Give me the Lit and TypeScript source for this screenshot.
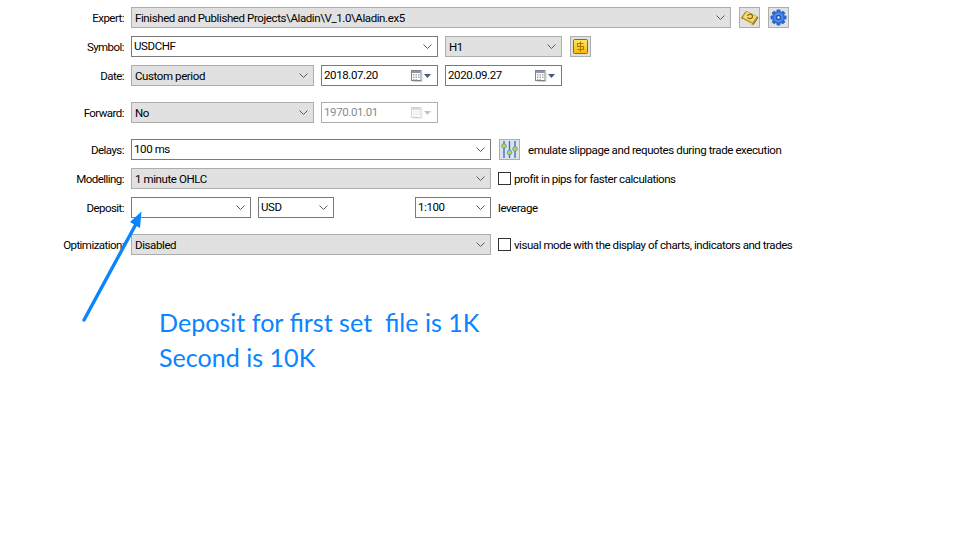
import { LitElement, html, css, svg } from "lit";
import { customElement } from "lit/decorators.js";

const chevron = html`<svg class="chev" viewBox="0 0 9 5" width="9" height="5"><path d="M.5.5 4.5 4.5 8.5.5" fill="none" stroke="#5a5a5a" stroke-width="1"/></svg>`;

const calendar = (off = false) => html`<span class="cal ${off ? "off" : ""}">
  <svg viewBox="0 0 12 12" width="12" height="12">
    <rect x=".5" y=".5" width="9.500" height="10" fill="#fff" stroke="#7d838e"/>
    <rect x="1" y="1" width="8.500" height="2" fill="#8f95a1"/>
    <path d="M2 4h1.500v1.500H2zM4.500 4H6v1.500H4.500zM7 4h1.500v1.500H7zM2 6.500h1.500V8H2zM4.500 6.500H6V8H4.500zM7 6.500h1.500V8H7zM2 9h1.500v1H2zM4.500 9H6v1H4.500z" fill="#a5abb6"/>
    <path d="M11 2.500V11.500H2.500" fill="none" stroke="#cfcfcf"/>
  </svg>
  <svg viewBox="0 0 7 4" width="7" height="4"><path d="M0 0h7L3.500 4z" fill="#47597a"/></svg>
</span>`;

const bookIcon = svg`<svg viewBox="0 0 19 19" width="19" height="19">
  <path d="M1.500 10 6 3.500 18 9.500 13 17z" fill="#b8941f" stroke="#7f6a1c"/>
  <path d="M2.500 9.500 6.500 3.500 17 8.500 12.500 14.500z" fill="#f3dd7c" stroke="#c6a52e" stroke-width=".6"/>
  <path d="M3 11.500 12.500 16.500" stroke="#fff2b8" stroke-width="1"/>
  <path d="M7 7.500 10.500 6M7.500 9.500c2.500 2 5.500 1 5-1.500-.3-1-1.500-1.800-2.500-1.800" fill="none" stroke="#94650f" stroke-width="1.300"/>
</svg>`;

const gearIcon = svg`<svg viewBox="0 0 19 19" width="19" height="19">
  <g fill="#2a66cf">
    <circle cx="9.500" cy="9.500" r="6.200"/>
    <rect x="7.500" y="1.500" width="4" height="16" rx="1"/>
    <rect x="7.500" y="1.500" width="4" height="16" rx="1" transform="rotate(45 9.500 9.500)"/>
    <rect x="7.500" y="1.500" width="4" height="16" rx="1" transform="rotate(90 9.500 9.500)"/>
    <rect x="7.500" y="1.500" width="4" height="16" rx="1" transform="rotate(135 9.500 9.500)"/>
  </g>
  <circle cx="9.500" cy="9.500" r="5" fill="#4f8be6"/>
  <circle cx="9.500" cy="9.500" r="2.800" fill="#1f57b8"/>
  <circle cx="9.500" cy="9.500" r="1.300" fill="#dce9fb"/>
</svg>`;

const dollarIcon = svg`<svg viewBox="0 0 17 17" width="17" height="17">
  <defs><linearGradient id="g" x1="0" y1="0" x2="0" y2="1"><stop offset="0" stop-color="#ffe566"/><stop offset="1" stop-color="#f9b800"/></linearGradient></defs>
  <rect x="1.500" y="1.500" width="14" height="14" rx="1" fill="url(#g)" stroke="#8a6d12"/>
  <path d="M11.500 5.500H5.500V8.500H11.500V11.500H5.500M8.500 3.500V13.500" fill="none" stroke="#a97a06" stroke-width="1.100"/>
</svg>`;

const slidersIcon = svg`<svg viewBox="0 0 19 19" width="19" height="19">
  <path d="M4 1V18M9.500 1V18M15 1V18" stroke="#2f78c8" stroke-width="1.400" fill="none"/>
  <circle cx="4" cy="6" r="2.300" fill="#b8d84a" stroke="#5c8ea8" stroke-width=".8"/>
  <circle cx="9.500" cy="12.500" r="2.300" fill="#b8d84a" stroke="#5c8ea8" stroke-width=".8"/>
  <circle cx="15" cy="9" r="2.300" fill="#b8d84a" stroke="#5c8ea8" stroke-width=".8"/>
</svg>`;

@customElement("app-root")
export class AppRoot extends LitElement {
  static styles = css`
    :host {
      display: block;
      position: relative;
      width: 971px;
      height: 556px;
      overflow: hidden;
      background: #fff;
      font-family: Roboto, "Liberation Sans", sans-serif;
      font-size: 11.5px;
      letter-spacing: -0.4px;
      color: #000;
    }
    .form { display: flex; flex-direction: column; padding-top: 7px; }
    .row { display: flex; align-items: center; gap: 7px; height: 21px; margin-bottom: 8px; }
    .row.wide { margin-bottom: 16px; }
    .label { width: 124px; text-align: right; flex: none; letter-spacing: -0.55px; }
    .combo {
      box-sizing: border-box;
      height: 21px;
      display: flex;
      align-items: center;
      justify-content: space-between;
      padding: 0 5px 0 3px;
      border: 1px solid #adadad;
      background: #e1e1e1;
      flex: none;
    }
    .combo.white { background: #fff; border-color: #7a7a7a; padding-left: 2px; }
    .combo.white .t { position: relative; top: -1px; }
    .date { padding: 0 6px 0 1px; }
    .date.off { border-color: #adadad; color: #8a8a8a; }
    .chev { flex: none; }
    .cal { display: flex; align-items: center; gap: 1px; }
    .cal.off { opacity: .35; }
    .btn {
      box-sizing: border-box;
      width: 21px;
      height: 21px;
      flex: none;
      display: flex;
      align-items: center;
      justify-content: center;
      border: 1px solid #adadad;
      background: #e1e1e1;
    }
    .btn.light { background: #dfe3e8; }
    .check { box-sizing: border-box; width: 13px; height: 13px; border: 1px solid #333; background: #fff; flex: none; }
    .cb-row { display: flex; align-items: center; gap: 3px; letter-spacing: -0.45px; }
    .w600 { width: 600px; } .w360 { width: 360px; } .w307 { width: 307px; }
    .w183 { width: 183px; } .w120 { width: 120px; } .w117 { width: 117px; } .w76 { width: 76px; }
    .gap8 { margin-left: 1px; }
    .push { margin-left: 74px; }
    .note {
      margin: 42px 0 0 159px;
      font-family: Lato, "Open Sans", sans-serif;
      font-size: 25.1px;
      line-height: 35px;
      letter-spacing: 0;
      color: #0a84ff;
      white-space: pre;
    }
    .arrow { position: absolute; left: 0; top: 0; pointer-events: none; }
  `;

  private combo(text: string, width: string, white = false) {
    return html`<div class="combo ${width} ${white ? "white" : ""}"><span class="t">${text}</span>${chevron}</div>`;
  }

  private date(text: string, off = false) {
    return html`<div class="combo white w117 date ${off ? "off" : ""}"><span class="t">${text}</span>${calendar(off)}</div>`;
  }

  render() {
    return html`
      <div class="form">
        <div class="row">
          <div class="label">Expert:</div>
          ${this.combo("Finished and Published Projects\\Aladin\\V_1.0\\Aladin.ex5", "w600")}
          <div class="btn gap8">${bookIcon}</div>
          <div class="btn gap8">${gearIcon}</div>
        </div>
        <div class="row">
          <div class="label">Symbol:</div>
          ${this.combo("USDCHF", "w307", true)}
          ${this.combo("H1", "w117")}
          <div class="btn gap8">${dollarIcon}</div>
        </div>
        <div class="row wide">
          <div class="label">Date:</div>
          ${this.combo("Custom period", "w183")}
          ${this.date("2018.07.20")}
          ${this.date("2020.09.27")}
        </div>
        <div class="row wide">
          <div class="label">Forward:</div>
          ${this.combo("No", "w183")}
          ${this.date("1970.01.01", true)}
        </div>
        <div class="row">
          <div class="label">Delays:</div>
          ${this.combo("100 ms", "w360", true)}
          <div class="btn light gap8">${slidersIcon}</div>
          <div class="gap8">emulate slippage and requotes during trade execution</div>
        </div>
        <div class="row">
          <div class="label">Modelling:</div>
          ${this.combo("1 minute OHLC", "w360")}
          <div class="cb-row"><span class="check"></span>profit in pips for faster calculations</div>
        </div>
        <div class="row wide">
          <div class="label">Deposit:</div>
          ${this.combo("", "w120", true)}
          ${this.combo("USD", "w76", true)}
          <div class="push">${this.combo("1:100", "w76", true)}</div>
          <div>leverage</div>
        </div>
        <div class="row">
          <div class="label">Optimization:</div>
          ${this.combo("Disabled", "w360")}
          <div class="cb-row"><span class="check"></span>visual mode with the display of charts, indicators and trades</div>
        </div>
      </div>
      <div class="note">Deposit for first set  file is 1K
Second is 10K</div>
      <svg class="arrow" width="971" height="556" viewBox="0 0 971 556">
        <path d="M84 320 136 224" stroke="#0a84ff" stroke-width="3.400" stroke-linecap="round" fill="none"/>
        <path d="M141.500 211.500 130 222 140 228z" fill="#0a84ff"/>
      </svg>
    `;
  }
}
